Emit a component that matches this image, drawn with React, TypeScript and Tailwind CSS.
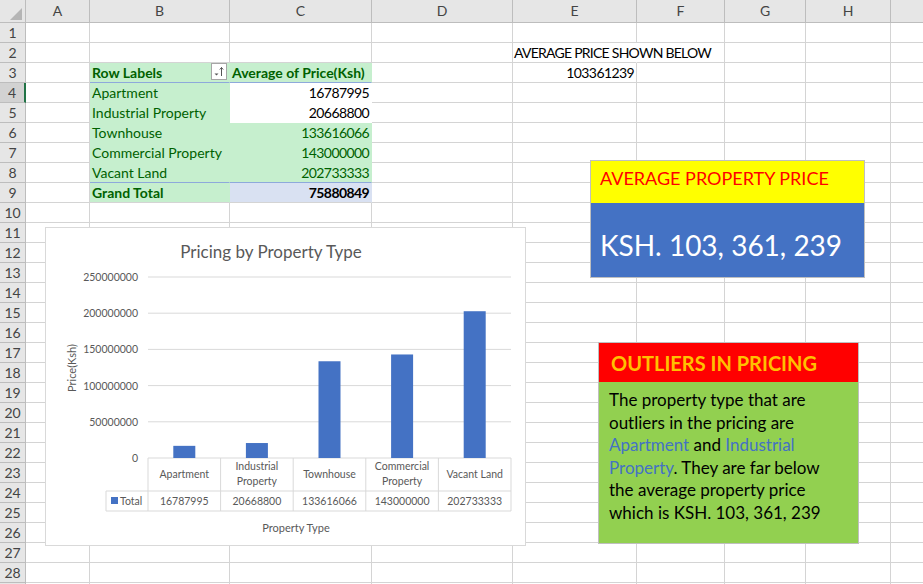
import React from "react";

const COLS = ["", "A", "B", "C", "D", "E", "F", "G", "H", "I"];
const ROWS = Array.from({ length: 29 }, (_, i) => i + 1);

const pivot = [
  { label: "Apartment", value: 16787995 },
  { label: "Industrial Property", value: 20668800 },
  { label: "Townhouse", value: 133616066 },
  { label: "Commercial Property", value: 143000000 },
  { label: "Vacant Land", value: 202733333 },
];

const base =
  "border-r border-b px-[2px] text-[14px] leading-[19px] whitespace-nowrap overflow-hidden";
// narrower digits, closer to Calibri
const num = "text-right text-[13px] tracking-[-0.6px]";

function FilterButton() {
  return (
    <span className="flex h-[17px] w-[16px] items-center justify-center border border-[#a6a6a6] bg-white">
      <svg width="12" height="12" viewBox="0 0 12 12">
        <path d="M1.5 7.5 L5.5 7.5 L3.5 9.5 Z" fill="#555" />
        <path d="M8.5 1.5 V10 M6.8 3.5 L8.5 1.5 L10.2 3.5" stroke="#555" strokeWidth="1" fill="none" />
      </svg>
    </span>
  );
}

function Cell({ row, col }: { row: number; col: string }) {
  const green = "bg-[#c6efce] text-[#006100]";
  // pivot table
  if ((col === "B" || col === "C") && row >= 3 && row <= 9) {
    if (row === 3) {
      return (
        <div
          className={`${base} ${green} flex items-start justify-between border-r-[#c6efce] border-b-[#8ea9db] font-bold`}
        >
          <span>{col === "B" ? "Row Labels" : "Average of Price(Ksh)"}</span>
          {col === "B" && <FilterButton />}
        </div>
      );
    }
    if (row === 9) {
      return col === "B" ? (
        <div className={`${base} ${green} border-r-[#c6efce] border-b-[#d4d4d4] font-bold`}>Grand Total</div>
      ) : (
        <div className={`${base} ${num} bg-[#d9e1f2] border-r-[#d9e1f2] border-b-[#d4d4d4] font-bold text-black`}>
          75880849
        </div>
      );
    }
    const item = pivot[row - 4];
    const bottom = row === 8 ? "border-b-[#8ea9db]" : "";
    if (col === "B") {
      return (
        <div className={`${base} ${green} border-[#c6efce] ${bottom}`}>{item.label}</div>
      );
    }
    if (row <= 5) {
      return (
        <div className={`${base} ${num} bg-white border-white text-black`}>{item.value}</div>
      );
    }
    return (
      <div className={`${base} ${num} ${green} border-[#c6efce] ${bottom}`}>{item.value}</div>
    );
  }
  if (col === "E" && row === 2) {
    return (
      <div
        className={`${base} relative z-10 overflow-visible border-b-[#d4d4d4] border-r-transparent pl-[1px] text-[13px] tracking-[-0.75px] text-black`}
      >
        AVERAGE PRICE SHOWN BELOW
      </div>
    );
  }
  if (col === "E" && row === 3) {
    return <div className={`${base} ${num} border-[#d4d4d4] text-black`}>103361239</div>;
  }
  return <div className={`${base} border-[#d4d4d4]`} />;
}

function Chart() {
  const y0 = 230;
  const scale = 181 / 250000000;
  const x0 = 102;
  const cw = 72.6;
  const ticks = [0, 50000000, 100000000, 150000000, 200000000, 250000000];
  const labels = [["Apartment"], ["Industrial", "Property"], ["Townhouse"], ["Commercial", "Property"], ["Vacant Land"]];
  const gray = "#595959";
  const line = "#d9d9d9";
  return (
    <svg width="479" height="317" viewBox="0 0 479 317" className="block">
      <text x="225" y="30" textAnchor="middle" fontSize="17" fill={gray} fontFamily="Lato">
        Pricing by Property Type
      </text>
      {ticks.map((t) => {
        const y = y0 - t * scale;
        return (
          <g key={t}>
            <line x1={x0} x2={465} y1={y} y2={y} stroke={line} strokeWidth="1" />
            <text x="92" y={y + 4} textAnchor="end" fontSize="10.5" fill={gray} fontFamily="Lato">
              {t}
            </text>
          </g>
        );
      })}
      <text
        transform="translate(30 140) rotate(-90)"
        textAnchor="middle"
        fontSize="11"
        fill={gray}
        fontFamily="Lato"
      >
        Price(Ksh)
      </text>
      {pivot.map((p, i) => {
        const h = p.value * scale;
        const cx = x0 + cw * (i + 0.5);
        return <rect key={p.label} x={cx - 11} y={y0 - h} width="22" height={h} fill="#4472c4" />;
      })}
      {/* data table */}
      <line x1={60} x2={465} y1={263} y2={263} stroke={line} />
      <line x1={60} x2={465} y1={283} y2={283} stroke={line} />
      <line x1={60} x2={60} y1={263} y2={283} stroke={line} />
      {[0, 1, 2, 3, 4, 5].map((i) => (
        <line key={i} x1={x0 + cw * i} x2={x0 + cw * i} y1={y0} y2={283} stroke={line} />
      ))}
      {labels.map((l, i) => {
        const cx = x0 + cw * (i + 0.5);
        return l.length === 1 ? (
          <text key={i} x={cx} y={250} textAnchor="middle" fontSize="10.5" fill={gray} fontFamily="Lato">
            {l[0]}
          </text>
        ) : (
          <g key={i}>
            <text x={cx} y={242} textAnchor="middle" fontSize="10.5" fill={gray} fontFamily="Lato">
              {l[0]}
            </text>
            <text x={cx} y={257} textAnchor="middle" fontSize="10.5" fill={gray} fontFamily="Lato">
              {l[1]}
            </text>
          </g>
        );
      })}
      {pivot.map((p, i) => (
        <text key={p.label} x={x0 + cw * (i + 0.5)} y={277} textAnchor="middle" fontSize="10.5" fill={gray} fontFamily="Lato">
          {p.value}
        </text>
      ))}
      <rect x="65" y="269" width="7" height="7" fill="#4472c4" />
      <text x="74" y="277" fontSize="10.5" fill={gray} fontFamily="Lato">
        Total
      </text>
      <text x="250" y="304" textAnchor="middle" fontSize="11" fill={gray} fontFamily="Lato">
        Property Type
      </text>
    </svg>
  );
}

export default function App() {
  return (
    <div className="relative h-[584px] w-[923px] overflow-hidden bg-white font-['Lato',sans-serif]">
      <div className="grid grid-cols-[26px_64px_140px_142px_141px_124px_88px_81px_85px_80px] grid-rows-[23px_repeat(29,20px)]">
        {COLS.map((c) =>
          c === "" ? (
            <div key="corner" className="relative border-r border-b border-[#bdbdbd] bg-[#e6e6e6]">
              <svg width="26" height="23" className="absolute inset-0">
                <polygon points="22,8 22,20 10,20" fill="#b5b5b5" />
              </svg>
            </div>
          ) : (
            <div
              key={c}
              className="border-r border-b border-[#bdbdbd] bg-[#e6e6e6] text-center text-[14px] leading-[22px] text-[#444]"
            >
              {c === "I" ? "" : c}
            </div>
          )
        )}
        {ROWS.map((r) => (
          <React.Fragment key={r}>
            <div
              className={`border-b text-center text-[14px] leading-[19px] text-[#444] ${
                r === 4
                  ? "border-b-[#bdbdbd] border-r-2 border-r-[#217346] bg-[#d2d2d2]"
                  : "border-r border-[#bdbdbd] bg-[#e6e6e6]"
              }`}
            >
              {r < 29 ? r : ""}
            </div>
            {COLS.slice(1).map((c) => (
              <Cell key={c} row={r} col={c} />
            ))}
          </React.Fragment>
        ))}
      </div>

      {/* chart object */}
      <div className="absolute left-[45px] top-[227px] h-[319px] w-[481px] border border-[#d9d9d9] bg-white">
        <Chart />
      </div>

      {/* average price box */}
      <div className="absolute left-[590px] top-[160px] flex h-[118px] w-[275px] flex-col border border-[#bfbfbf]">
        <div className="flex h-[42px] items-center bg-[#ffff00] pb-[8px] pl-[9px] text-[18px] text-[#ff0000]">
          AVERAGE PROPERTY PRICE
        </div>
        <div className="flex flex-1 items-center bg-[#4472c4] pl-[9px] pt-[10px] text-[28px] text-white">
          KSH. 103, 361, 239
        </div>
      </div>

      {/* outliers box */}
      <div className="absolute left-[598px] top-[342px] flex h-[202px] w-[261px] flex-col border border-[#bfbfbf]">
        <div className="flex h-[39px] items-center bg-[#ff0000] pl-[12px] text-[20px] font-bold text-[#ffc000]">
          OUTLIERS IN PRICING
        </div>
        <div className="flex-1 bg-[#92d050] pl-[10px] pr-[14px] pt-[7px] text-[17px] leading-[22.6px] text-black">
          The property type that are outliers in the pricing are{" "}
          <span className="text-[#4472c4]">Apartment</span> and{" "}
          <span className="text-[#4472c4]">Industrial Property</span>. They are far below the average property
          price which is KSH. 103, 361, 239
        </div>
      </div>
    </div>
  );
}
